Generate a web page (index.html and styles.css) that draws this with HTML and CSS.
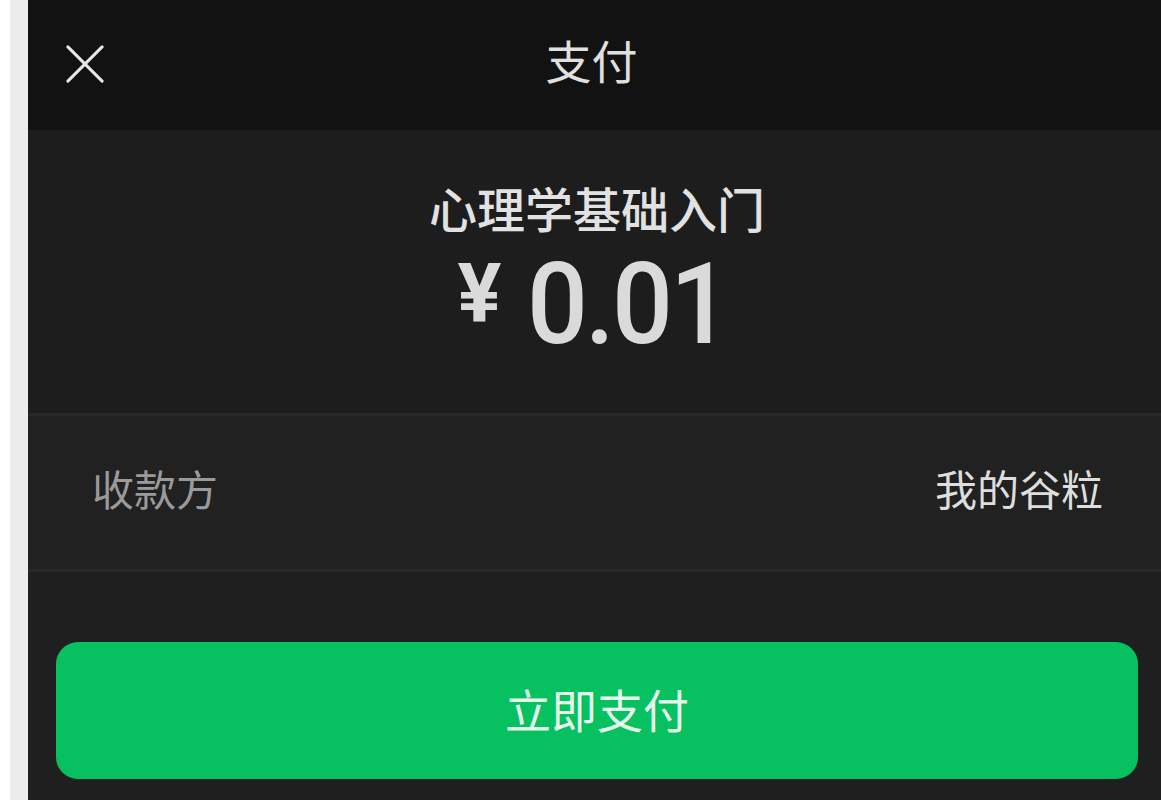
FILE: index.html
```html
<!DOCTYPE html>
<html lang="zh-CN">
<head>
<meta charset="utf-8">
<link rel="stylesheet" href="styles.css">
</head>
<body>
<div class="edge"></div>
<div class="app">
  <header class="topbar">
    <svg class="close" viewBox="0 0 40 40" width="40" height="40"><path d="M2 2 L38 38 M38 2 L2 38" stroke="#e8e8e8" stroke-width="3.2" stroke-linecap="round" fill="none"/></svg>
    <div class="title">支付</div>
  </header>
  <section class="summary">
    <div class="product">心理学基础入门</div>
    <div class="amount"><span class="yen">¥</span><span class="num">0.01</span></div>
  </section>
  <div class="row">
    <span class="label">收款方</span>
    <span class="value">我的谷粒</span>
  </div>
  <div class="actions">
    <button class="pay">立即支付</button>
  </div>
</div>
</body>
</html>
```
FILE: styles.css
```css
html, body {
  margin: 0;
  height: 100%;
}
body {
  display: flex;
  background: #1f1f1f;
  font-family: "Noto Sans CJK SC", "Noto Sans", sans-serif;
  overflow: hidden;
}
.edge {
  width: 18px;
  flex: none;
  background: #ececec;
  border-left: 10px solid #ffffff;
}
.app {
  flex: 1;
  display: flex;
  flex-direction: column;
  background: #1f1f1f;
  min-height: 800px;
}
.topbar {
  height: 130px;
  flex: none;
  background: #121212;
  display: flex;
  align-items: center;
  justify-content: center;
  position: relative;
}
.close {
  position: absolute;
  left: 38px;
  top: 45px;
  width: 38px;
  height: 38px;
}
.title {
  color: #e0e0e0;
  font-size: 46px;
  line-height: 1;
  margin-left: -6px;
  margin-bottom: 12px;
}
.summary {
  height: 283px;
  box-sizing: border-box;
  display: flex;
  flex-direction: column;
  align-items: center;
  padding-top: 53px;
  background: #1d1d1d;
}
.product {
  color: #e2e2e2;
  font-size: 48px;
  line-height: 1;
  font-weight: 500;
  margin-left: 5px;
}
.amount {
  display: flex;
  align-items: flex-start;
  margin-top: 16px;
  color: #dadada;
  line-height: 1;
  margin-left: 10px;
}
.yen {
  font-family: "Roboto", sans-serif;
  font-weight: 700;
  font-size: 82px;
  margin-top: 5px;
  margin-right: 26px;
}
.num {
  font-family: "Roboto", sans-serif;
  font-weight: 500;
  font-size: 114px;
  letter-spacing: -3px;
  transform: scaleX(0.94);
  transform-origin: left center;
}
.row {
  height: 155px;
  box-sizing: border-box;
  display: flex;
  align-items: center;
  justify-content: space-between;
  padding: 0 58px 10px 64px;
  border-top: 3px solid #292929;
  border-bottom: 3px solid #292929;
  background: #212121;
  font-size: 42px;
  height: 159px;
}
.label {
  color: #9a9a9a;
}
.value {
  color: #dedede;
}
.actions {
  padding: 70px 23px 0 28px;
}
.pay {
  display: block;
  width: 100%;
  height: 137px;
  border: none;
  border-radius: 22px;
  background: #07c160;
  color: #e6f8ec;
  font-family: "Noto Sans CJK SC", sans-serif;
  font-size: 46px;
  padding: 0 0 6px;
  cursor: pointer;
}
```
